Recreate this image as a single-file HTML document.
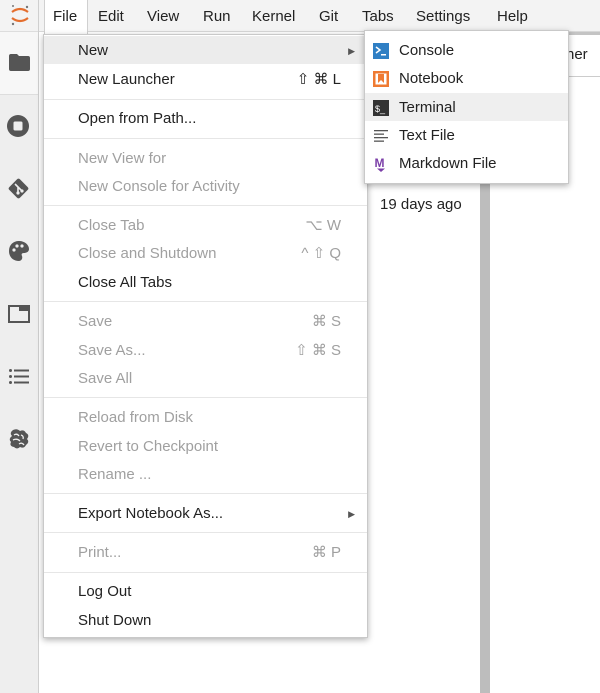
<!DOCTYPE html>
<html><head><meta charset="utf-8"><style>
*{margin:0;padding:0;box-sizing:border-box}
body{width:600px;height:693px;overflow:hidden;background:#fff;font-family:"Liberation Sans",sans-serif;font-size:15px;color:#222;position:relative}
.abs{position:absolute}
#side{left:0;top:0;width:39px;height:693px;background:#eeeeee;border-right:1px solid #cfcfcf}
#menubar{left:39px;top:0;width:561px;height:32px;background:#f3f3f3;border-bottom:1px solid #d8d8d8}
.mb{position:absolute;top:8px;font-size:15px;color:#222}
#filetab{left:44px;top:0;width:44px;height:34px;background:#fff;border-left:1px solid #d0d0d0;border-right:1px solid #d0d0d0}
.menu{background:#fff;border:1px solid #c9c9c9;box-shadow:0 2px 6px rgba(0,0,0,.3)}
.it{position:absolute;left:0;right:0;height:28px;line-height:30px;padding-left:34px}
.dis{color:#a0a0a0}
.sc{position:absolute;right:26px;top:0}
.sep{position:absolute;left:0;right:0;height:1px;background:#e6e6e6}
.ic{position:absolute;left:8px;top:7px;width:16px;height:16px}
</style></head><body>
<div id="side" class="abs">
 <div class="abs" style="left:0;top:0;width:38px;height:32px;background:#f3f3f3;border-bottom:1px solid #ddd"></div>
 <svg class="abs" style="left:9px;top:3px" width="22" height="24" viewBox="0 0 22 24"><path d="M3 9 Q11 3 19 9" stroke="#e46e2e" stroke-width="2.2" fill="none"/><path d="M3 15 Q11 21 19 15" stroke="#e46e2e" stroke-width="2.2" fill="none"/><circle cx="4" cy="3" r="1" fill="#777"/><circle cx="18" cy="4" r="1.2" fill="#777"/><circle cx="4" cy="21" r="1.2" fill="#777"/></svg>
 <div class="abs" style="left:0;top:32px;width:38px;height:63px;background:#f7f7f7;border-bottom:1px solid #ddd"></div>
 <svg class="abs" style="left:9px;top:54px" width="21" height="17" viewBox="0 0 21 17"><path d="M0 2 Q0 0 2 0 H8 L10 2 H19 Q21 2 21 4 V15 Q21 17 19 17 H2 Q0 17 0 15Z" fill="#555"/></svg>
 <svg class="abs" style="left:7px;top:115px" width="22" height="22" viewBox="0 0 22 22"><circle cx="11" cy="11" r="11" fill="#555"/><rect x="6.5" y="6.5" width="9" height="9" rx="1.5" fill="#eee"/></svg>
 <svg class="abs" style="left:7px;top:177px" width="23" height="23" viewBox="0 0 23 23"><rect x="4" y="4" width="15" height="15" rx="2" transform="rotate(45 11.5 11.5)" fill="#555"/><path d="M8 7 L15 14 M11 10 V16" stroke="#eee" stroke-width="1.6"/><circle cx="11" cy="16" r="1.6" fill="#eee"/><circle cx="15" cy="14" r="1.6" fill="#eee"/></svg>
 <svg class="abs" style="left:9px;top:241px" width="20" height="20" viewBox="0 0 20 20"><path d="M10 0 C16 0 20 4 20 8 C20 11 17 12 15 12 C13 12 12 13 13 15 C14 18 12 20 10 20 C4 20 0 16 0 10 C0 4 4 0 10 0Z" fill="#555"/><circle cx="5" cy="9" r="1.6" fill="#eee"/><circle cx="8" cy="5" r="1.6" fill="#eee"/><circle cx="13" cy="5" r="1.6" fill="#eee"/></svg>
 <svg class="abs" style="left:8px;top:305px" width="22" height="18" viewBox="0 0 22 18"><rect x="1" y="1" width="20" height="16" fill="none" stroke="#555" stroke-width="2"/><rect x="11" y="1" width="10" height="5" fill="#555"/></svg>
 <svg class="abs" style="left:9px;top:369px" width="20" height="15" viewBox="0 0 20 15"><g fill="#555"><circle cx="1.5" cy="1.5" r="1.5"/><circle cx="1.5" cy="7.5" r="1.5"/><circle cx="1.5" cy="13.5" r="1.5"/><rect x="5" y="0.5" width="15" height="2"/><rect x="5" y="6.5" width="15" height="2"/><rect x="5" y="12.5" width="15" height="2"/></g></svg>
 <svg class="abs" style="left:7px;top:427px" width="24" height="24" viewBox="0 0 24 24"><path d="M6 3 Q2 6 5 9 Q1 12 4 15 Q2 19 7 20 Q10 23 13 20 Q17 22 19 18 Q23 15 20 12 Q23 8 19 6 Q17 2 13 4 Q10 1 6 3Z" fill="#555"/><path d="M7 8 Q10 6 12 9 M6 13 Q10 11 13 14 M12 17 Q15 15 17 18 M14 8 Q17 9 16 12" stroke="#eee" stroke-width="1.3" fill="none"/></svg>
</div>
<div id="menubar" class="abs"></div>
<div id="filetab" class="abs"></div>
<div class="mb" style="left:53px">File</div>
<div class="mb" style="left:98px">Edit</div>
<div class="mb" style="left:147px">View</div>
<div class="mb" style="left:203px">Run</div>
<div class="mb" style="left:252px">Kernel</div>
<div class="mb" style="left:319px">Git</div>
<div class="mb" style="left:362px">Tabs</div>
<div class="mb" style="left:416px">Settings</div>
<div class="mb" style="left:497px">Help</div>

<div class="abs" style="left:370px;top:32px;width:110px;height:661px;background:#fff"></div>
<div class="abs" style="left:380px;top:196px;font-size:15px">19 days ago</div>
<div class="abs" style="left:480px;top:32px;width:10px;height:661px;background:#bdbdbd"></div>
<div class="abs" style="left:490px;top:32px;width:110px;height:3px;background:#c4c4c4"></div>
<div class="abs" style="left:490px;top:35px;width:110px;height:42px;background:#fff;border-bottom:1px solid #ccc"></div>
<div class="abs" style="left:566px;top:46px">her</div>

<div class="menu abs" style="left:43px;top:34px;width:325px;height:604px">
 <div class="it" style="top:1px;background:#ececec">New<span class="sc" style="right:12px;font-size:9px;color:#555">&#9654;</span></div>
 <div class="it" style="top:30px">New Launcher<span class="sc">⇧ ⌘ L</span></div>
 <div class="sep" style="top:64px"></div>
 <div class="it" style="top:69px">Open from Path...</div>
 <div class="sep" style="top:103px"></div>
 <div class="it dis" style="top:109px">New View for</div>
 <div class="it dis" style="top:137px">New Console for Activity</div>
 <div class="sep" style="top:170px"></div>
 <div class="it dis" style="top:176px">Close Tab<span class="sc">⌥ W</span></div>
 <div class="it dis" style="top:204px">Close and Shutdown<span class="sc">^ ⇧ Q</span></div>
 <div class="it" style="top:233px">Close All Tabs</div>
 <div class="sep" style="top:266px"></div>
 <div class="it dis" style="top:272px">Save<span class="sc">⌘ S</span></div>
 <div class="it dis" style="top:301px">Save As...<span class="sc">⇧ ⌘ S</span></div>
 <div class="it dis" style="top:329px">Save All</div>
 <div class="sep" style="top:362px"></div>
 <div class="it dis" style="top:368px">Reload from Disk</div>
 <div class="it dis" style="top:397px">Revert to Checkpoint</div>
 <div class="it dis" style="top:425px">Rename ...</div>
 <div class="sep" style="top:458px"></div>
 <div class="it" style="top:464px">Export Notebook As...<span class="sc" style="right:12px;font-size:9px;color:#555">&#9654;</span></div>
 <div class="sep" style="top:497px"></div>
 <div class="it dis" style="top:503px">Print...<span class="sc">⌘ P</span></div>
 <div class="sep" style="top:537px"></div>
 <div class="it" style="top:542px">Log Out</div>
 <div class="it" style="top:571px">Shut Down</div>
</div>

<div class="menu abs" style="left:364px;top:30px;width:205px;height:154px">
 <div class="it" style="top:5px"><svg class="ic" viewBox="0 0 16 16"><rect width="16" height="16" fill="#2f7fc4"/><path d="M3 4 L7 7 L3 10" stroke="#fff" stroke-width="1.5" fill="none"/><rect x="8" y="11" width="5" height="1.5" fill="#fff"/></svg>Console</div>
 <div class="it" style="top:33px"><svg class="ic" viewBox="0 0 16 16"><rect width="16" height="16" fill="#ef7a32"/><rect x="2.5" y="2.5" width="11" height="11" fill="#fff"/><path d="M5 3 H11 V12 L8 9 L5 12Z" fill="#ef7a32"/></svg>Notebook</div>
 <div class="it" style="top:62px;background:#efefef"><svg class="ic" viewBox="0 0 16 16"><rect width="16" height="16" fill="#333"/><text x="2" y="12" font-size="9" fill="#fff" font-family="Liberation Sans">$_</text></svg>Terminal</div>
 <div class="it" style="top:90px"><svg class="ic" viewBox="0 0 16 16"><g fill="#555"><rect x="1" y="2" width="14" height="1.3"/><rect x="1" y="5.5" width="10" height="1.3"/><rect x="1" y="9" width="14" height="1.3"/><rect x="1" y="12.5" width="10" height="1.3"/></g></svg>Text File</div>
 <div class="it" style="top:118px"><svg class="ic" viewBox="0 0 16 16"><text x="1.5" y="11" font-size="12" font-weight="bold" fill="#7b3fa8" font-family="Liberation Sans">M</text><path d="M4 12.5 H12 L8 16Z" fill="#7b3fa8"/></svg>Markdown File</div>
</div>
</body></html>
